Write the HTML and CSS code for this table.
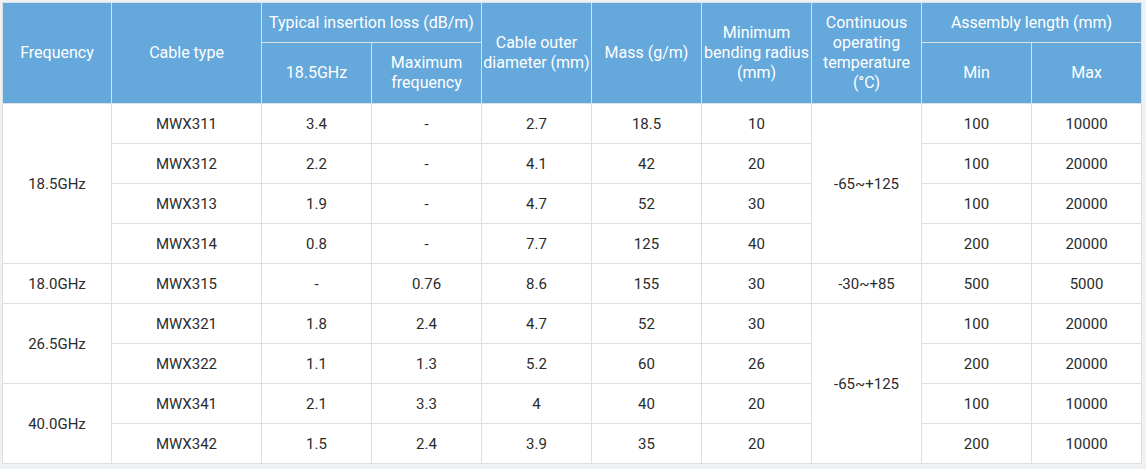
FILE: index.html
```html
<!DOCTYPE html>
<html>
<head>
<meta charset="utf-8">
<link rel="stylesheet" href="styles.css">
</head>
<body>
<table class="spec">
  <colgroup>
    <col class="c-freq"><col class="c-type"><col class="c-n"><col class="c-n"><col class="c-n"><col class="c-n"><col class="c-n"><col class="c-n"><col class="c-n"><col class="c-n">
  </colgroup>
  <thead>
    <tr class="h1">
      <th rowspan="2">Frequency</th>
      <th rowspan="2">Cable type</th>
      <th colspan="2">Typical insertion loss (dB/m)</th>
      <th rowspan="2">Cable outer diameter (mm)</th>
      <th rowspan="2">Mass (g/m)</th>
      <th rowspan="2">Minimum bending radius (mm)</th>
      <th rowspan="2">Continuous operating temperature (°C)</th>
      <th colspan="2">Assembly length (mm)</th>
    </tr>
    <tr class="h2">
      <th>18.5GHz</th>
      <th>Maximum frequency</th>
      <th>Min</th>
      <th>Max</th>
    </tr>
  </thead>
  <tbody>
    <tr><td rowspan="4">18.5GHz</td><td>MWX311</td><td>3.4</td><td>-</td><td>2.7</td><td>18.5</td><td>10</td><td rowspan="4">-65~+125</td><td>100</td><td>10000</td></tr>
    <tr><td>MWX312</td><td>2.2</td><td>-</td><td>4.1</td><td>42</td><td>20</td><td>100</td><td>20000</td></tr>
    <tr><td>MWX313</td><td>1.9</td><td>-</td><td>4.7</td><td>52</td><td>30</td><td>100</td><td>20000</td></tr>
    <tr><td>MWX314</td><td>0.8</td><td>-</td><td>7.7</td><td>125</td><td>40</td><td>200</td><td>20000</td></tr>
    <tr><td>18.0GHz</td><td>MWX315</td><td>-</td><td>0.76</td><td>8.6</td><td>155</td><td>30</td><td>-30~+85</td><td>500</td><td>5000</td></tr>
    <tr><td rowspan="2">26.5GHz</td><td>MWX321</td><td>1.8</td><td>2.4</td><td>4.7</td><td>52</td><td>30</td><td rowspan="4">-65~+125</td><td>100</td><td>20000</td></tr>
    <tr><td>MWX322</td><td>1.1</td><td>1.3</td><td>5.2</td><td>60</td><td>26</td><td>200</td><td>20000</td></tr>
    <tr><td rowspan="2">40.0GHz</td><td>MWX341</td><td>2.1</td><td>3.3</td><td>4</td><td>40</td><td>20</td><td>100</td><td>10000</td></tr>
    <tr><td>MWX342</td><td>1.5</td><td>2.4</td><td>3.9</td><td>35</td><td>20</td><td>200</td><td>10000</td></tr>
  </tbody>
</table>
</body>
</html>
```
FILE: styles.css
```css
html, body {
  margin: 0;
  padding: 0;
  background: #eef2f5;
}
body {
  padding: 2px;
  font-family: Roboto, "Liberation Sans", sans-serif;
}
.spec {
  border-collapse: collapse;
  table-layout: fixed;
  width: 1140px;
  font-size: 15px;
  line-height: 20px;
  text-align: center;
  background: #fff;
}
.c-freq { width: 109px; }
.c-type { width: 150px; }
.c-n { width: 110px; }
.spec th, .spec td {
  border: 1px solid #dcdfe3;
  padding: 0;
  vertical-align: middle;
}
.spec th {
  background: #64a8dc;
  color: #fff;
  font-weight: 400;
  font-size: 16px;
}
.h1 { height: 40px; }
.h2 { height: 61px; }
.spec td {
  height: 39px;
  color: #2b2b2b;
}
```
